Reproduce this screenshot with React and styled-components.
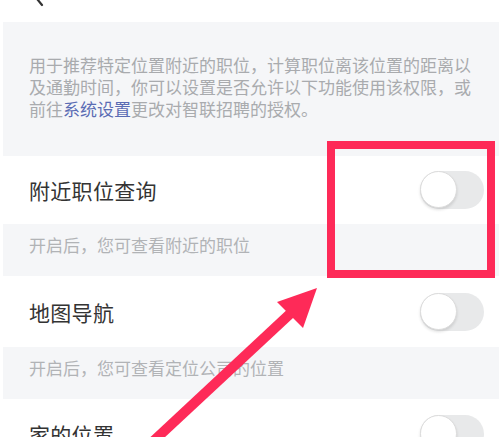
import React, { useState } from "react";
import styled, { createGlobalStyle } from "styled-components";

const GlobalStyle = createGlobalStyle`
  html, body {
    margin: 0;
    padding: 0;
    background: #ffffff;
    overflow: hidden;
  }
  body {
    font-family: "Noto Sans CJK SC", "Noto Sans", sans-serif;
  }
`;

const Page = styled.div`
  position: relative;
  width: 499px;
  height: 437px;
  overflow: hidden;
  background: #ffffff;
`;

const Main = styled.div`
  margin-left: 3px;
`;

const Header = styled.div`
  height: 22px;
  padding-left: 30px;
  background: #ffffff;
`;

const Intro = styled.div`
  background: #f5f6f8;
  padding: 32px 26px 36px 26px;
  font-size: 17px;
  line-height: 22px;
  color: #a9abae;
`;

const Link = styled.span`
  color: #5a6cb4;
`;

const Row = styled.div`
  display: flex;
  align-items: center;
  justify-content: space-between;
  height: ${(p) => p.h}px;
  padding: 0 15px 0 26px;
  background: #ffffff;
`;

const Title = styled.div`
  font-size: 21px;
  color: #333333;
  letter-spacing: 0.3px;
`;

const Hint = styled.div`
  height: 52px;
  box-sizing: border-box;
  padding: 10px 26px 0 26px;
  background: #f5f6f8;
  font-size: 17px;
  line-height: 22px;
  color: #b1b3b6;
`;

const Track = styled.button`
  position: relative;
  width: 64px;
  height: 38px;
  border: none;
  padding: 0;
  border-radius: 19px;
  background: ${(p) => (p.on ? "#3ec5a8" : "#e8e9ea")};
  cursor: pointer;
`;

const Knob = styled.span`
  position: absolute;
  top: 0;
  left: ${(p) => (p.on ? "27px" : "0")};
  width: 37px;
  height: 37px;
  border-radius: 50%;
  background: #ffffff;
  box-sizing: border-box;
  border: 1px solid #dcdcdc;
  box-shadow: 0 2px 3px rgba(0, 0, 0, 0.12);
`;

const Highlight = styled.div`
  position: absolute;
  left: 327px;
  top: 141px;
  width: 168px;
  height: 137px;
  box-sizing: border-box;
  border: 8px solid #fe2a58;
  pointer-events: none;
`;

const Overlay = styled.svg`
  position: absolute;
  left: 0;
  top: 0;
  pointer-events: none;
`;

const Toggle = () => {
  const [on, setOn] = useState(false);
  return (
    <Track on={on ? 1 : 0} onClick={() => setOn(!on)}>
      <Knob on={on ? 1 : 0} />
    </Track>
  );
};

const items = [
  { title: "附近职位查询", hint: "开启后，您可查看附近的职位", h: 68 },
  { title: "地图导航", hint: "开启后，您可查看定位公司的位置", h: 71 },
  { title: "家的位置", hint: null, h: 70 },
];

const App = () => {
  return (
    <Page>
      <GlobalStyle />
      <Main>
        <Header>
          <svg width="16" height="22" viewBox="0 0 16 22">
            <path d="M0 -6 L9 5" stroke="#333" strokeWidth="2.2" fill="none" strokeLinecap="round" />
          </svg>
        </Header>
        <Intro>
          用于推荐特定位置附近的职位，计算职位离该位置的距离以及通勤时间，你可以设置是否允许以下功能使用该权限，或前往
          <Link>系统设置</Link>更改对智联招聘的授权。
        </Intro>
        {items.map((it) => (
          <React.Fragment key={it.title}>
            <Row h={it.h}>
              <Title>{it.title}</Title>
              <Toggle />
            </Row>
            {it.hint && <Hint>{it.hint}</Hint>}
          </React.Fragment>
        ))}
      </Main>
      <Highlight />
      <Overlay width="499" height="437" viewBox="0 0 499 437">
        <line x1="146" y1="448" x2="292" y2="312" stroke="#fe2a58" strokeWidth="10" />
        <polygon points="317,288 277,302 303,328" fill="#fe2a58" />
      </Overlay>
    </Page>
  );
};

export default App;
